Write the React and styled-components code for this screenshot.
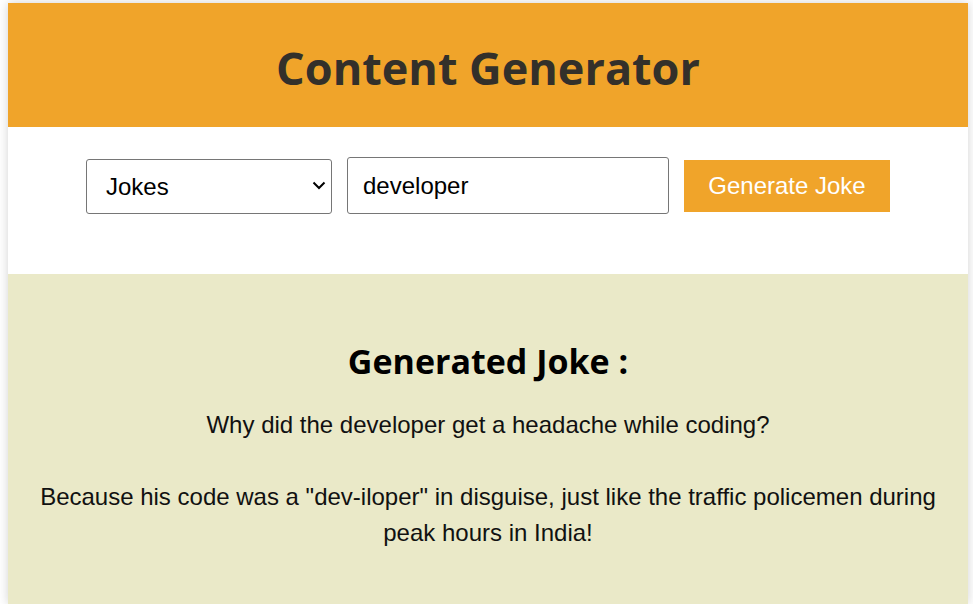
import React, { useState } from 'react'
import styled, { createGlobalStyle } from 'styled-components'

const GlobalStyle = createGlobalStyle`
  body {
    margin: 0;
    padding: 3px 0 0 8px;
    background: #ffffff;
    font-family: "Liberation Sans", Arial, sans-serif;
  }
`

const Card = styled.div`
  width: 960px;
  box-shadow: 0 0 10px rgba(0, 0, 0, 0.18);
  background: #ffffff;
`

const Header = styled.header`
  height: 124px;
  background: #f0a42a;
  display: flex;
  align-items: center;
  justify-content: center;
`

const Title = styled.h1`
  margin: 0 0 -4px;
  font-family: "Open Sans", "Noto Sans", sans-serif;
  font-weight: 700;
  font-size: 45px;
  color: #33302a;
`

const Form = styled.div`
  height: 147px;
  display: flex;
  align-items: flex-start;
  justify-content: center;
  gap: 15px;
  padding-top: 30px;
  box-sizing: border-box;
`

const SelectWrap = styled.div`
  position: relative;
  margin-top: 2px;
`

const Select = styled.select`
  appearance: none;
  width: 246px;
  height: 55px;
  padding: 0 40px 0 19px;
  font-family: "Liberation Sans", Arial, sans-serif;
  font-size: 24px;
  color: #000;
  background: #fff;
  border: 1px solid #767676;
  border-radius: 3px;
  outline: none;
`

const Chevron = styled.svg`
  position: absolute;
  right: 6px;
  top: 22px;
  pointer-events: none;
`

const Input = styled.input`
  width: 322px;
  height: 57px;
  padding: 0 15px;
  box-sizing: border-box;
  font-family: "Liberation Sans", Arial, sans-serif;
  font-size: 24px;
  color: #000;
  border: 1px solid #767676;
  border-radius: 3px;
  outline: none;
`

const Button = styled.button`
  width: 206px;
  height: 52px;
  margin-top: 3px;
  border: none;
  background: #f0a42a;
  color: #ffffff;
  font-family: "Liberation Sans", Arial, sans-serif;
  font-size: 24px;
  cursor: pointer;
`

const Result = styled.section`
  height: 330px;
  background: #eae9c8;
  display: flex;
  flex-direction: column;
  align-items: center;
  padding: 64px 30px 0;
  box-sizing: border-box;
`

const ResultTitle = styled.h2`
  margin: 0 0 23px;
  font-family: "Open Sans", "Noto Sans", sans-serif;
  font-weight: 700;
  font-size: 34px;
  color: #000;
`

const JokeText = styled.p`
  margin: 0;
  white-space: pre-line;
  text-align: center;
  font-size: 24px;
  line-height: 36px;
  color: #111;
`

const joke =
  'Why did the developer get a headache while coding?\n\nBecause his code was a "dev-iloper" in disguise, just like the traffic policemen during peak hours in India!'

export default function App() {
  const [type, setType] = useState('Jokes')
  const [topic, setTopic] = useState('developer')

  return (
    <>
      <GlobalStyle />
      <Card>
        <Header>
          <Title>Content Generator</Title>
        </Header>
        <Form>
          <SelectWrap>
            <Select value={type} onChange={e => setType(e.target.value)}>
              <option>Jokes</option>
              <option>Quotes</option>
              <option>Stories</option>
            </Select>
            <Chevron width="14" height="9" viewBox="0 0 14 9">
              <path d="M1.5 1.5 L7 7 L12.5 1.5" fill="none" stroke="#000" strokeWidth="2" />
            </Chevron>
          </SelectWrap>
          <Input value={topic} onChange={e => setTopic(e.target.value)} />
          <Button>Generate Joke</Button>
        </Form>
        <Result>
          <ResultTitle>Generated Joke :</ResultTitle>
          <JokeText>{joke}</JokeText>
        </Result>
      </Card>
    </>
  )
}
